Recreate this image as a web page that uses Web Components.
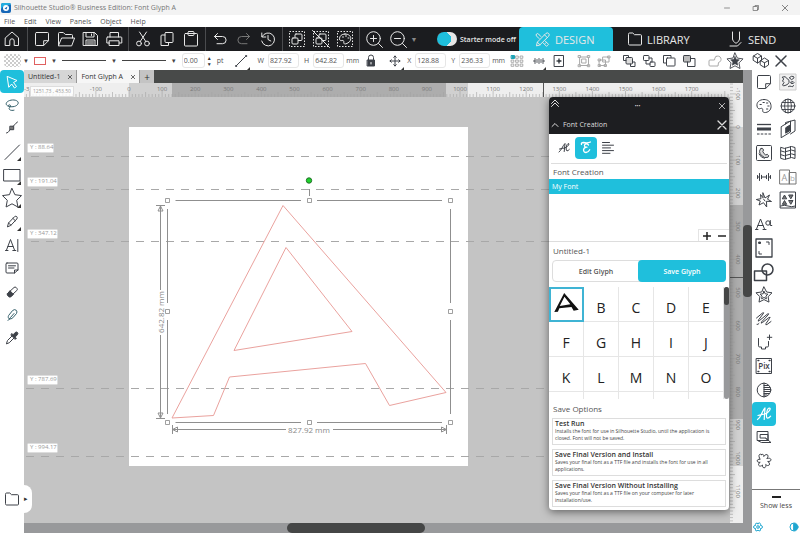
<!DOCTYPE html>
<html lang="en">
<head>
<meta charset="utf-8">
<title>Silhouette Studio</title>
<style>
html,body{margin:0;height:100%}
body{font-family:"Open Sans","Noto Sans",sans-serif;font-size:7px;color:#555;overflow:hidden}
</style>
</head>
<body>
<sk-app></sk-app>
<script>
const define = (name, html, setup) => {
  const t = document.createElement('template');
  t.innerHTML = '<style>*{box-sizing:border-box}button,input,select{font:inherit;color:inherit;margin:0;padding:0;border:0;background:none;outline:0}</style>' + html;
  customElements.define(name, class extends HTMLElement {
    constructor() {
      super();
      this.attachShadow({ mode: 'open' }).append(t.content.cloneNode(true));
    }
    connectedCallback() { if (setup && !this.ready) { this.ready = true; setup(this, this.shadowRoot); } }
  });
};

/* Icons share a 24 x 24 grid and are stroked with the current colour. */
const star = 'M12 4l2.4 5.1 5.6.8-4 4 1 5.6-5-2.7-5 2.7 1-5.6-4-4 5.6-.8z';
const ICONS = {
  home: '<path d="M5.500 10.700L12 5l6.500 5.700V18.500h-4.300V14a2.200 2.200 0 0 0-4.400 0v4.500H5.500z"/>',
  page: '<path d="M6.500 5.500h11q1 0 1 1v7.200l-4.800 4.800H6.500q-1 0-1-1v-11q0-1 1-1zM13.700 18.300v-4.600h4.600"/>',
  open: '<path d="M4.500 18V6.500q0-1 1-1h3.800l2 2h6.200q1 0 1 1V11M4.500 18.500L7.600 11h13l-2.800 7.500z"/>',
  save: '<path d="M5.500 5.500h11l3 3v10h-14zM8 5.500v4.500h8V5.500M8 18.500v-5.500h9v5.500M9.500 15h6M9.500 17h6M13.500 7v1.500"/>',
  print: '<path d="M8 10V5.500h8.500V10M5.500 10h13.500q.8 0 .8.8v5.200h-2.500M7.500 16H4.800v-5.200q0-.8.8-.8M7.500 13.800h9.500v4.700H7.500z"/>',
  cut: '<path d="M8.500 5l6.300 9.500M15.500 5L9.200 14.500"/><circle cx="8" cy="16.500" r="2.400"/><circle cx="16" cy="16.500" r="2.400"/>',
  copy: '<rect x="10" y="5.500" width="8" height="10" rx="1"/><path d="M10 8H7q-1 0-1 1v9.500h7.500v-3"/>',
  paste: '<rect x="5.500" y="6.500" width="13" height="12.500" rx="1"/><rect x="9" y="4.500" width="6" height="4" rx="1"/>',
  undo: '<path d="M9.500 6.500L6.500 9.500l3 3M6.500 9.500h8a3.600 3.600 0 0 1 0 7.200H9"/>',
  redo: '<path d="M14.500 6.500l3 3-3 3M17.500 9.500h-8a3.600 3.600 0 0 0 0 7.200H15"/>',
  history: '<path d="M6.200 9.500a6.500 6.500 0 1 1-.5 4.500M5.800 6v4h4M12 8.500V12.500l2.800 1.500"/>',
  selall: '<rect x="4.500" y="4.500" width="15" height="15" stroke-dasharray="1.500 1.500" stroke-linecap="butt"/><rect x="10" y="7" width="7" height="6.500" rx="1"/><rect x="7" y="11" width="6" height="6" rx="1" fill="#1b1c1f"/>',
  selnone: '<rect x="4.500" y="4.500" width="15" height="15" stroke-dasharray="1.500 1.500" stroke-linecap="butt"/><rect x="10" y="7" width="7" height="6.500" rx="1"/><rect x="7" y="11" width="6" height="6" rx="1" fill="#1b1c1f"/><path d="M3.500 3.500l17 17"/>',
  selcolor: '<rect x="4.500" y="4.500" width="15" height="15" stroke-dasharray="1.500 1.500" stroke-linecap="butt"/><path d="M12 7c-3.500 0-5.500 2-5.500 4.800 0 2 1.500 2 2.500 1.700 1.400-.4 2 .6 1.800 1.700-.3 1.800 1 2 2.200 1.600 3-1 4.800-2.800 4.800-5.300C17.800 8.800 15.500 7 12 7z"/><path d="M9.500 10h1M12.500 9h1M15 11h1"/>',
  zoomin: '<circle cx="11.500" cy="11.500" r="6.800"/><path d="M16.500 16.500l4 4M8.500 11.500h6M11.500 8.500v6"/>',
  zoomout: '<circle cx="11.500" cy="11.500" r="6.800"/><path d="M16.500 16.500l4 4M8.500 11.500h6"/>',
  design: '<path d="M5.500 18.500l.8-3.300L14.800 6.500q1.600-1.300 2.900 0 1.200 1.300 0 2.700L9 17.800zM6.300 15.200L9 17.800M13.500 7.800l2.800 2.800"/><path d="M9.800 9.500L7.500 7q-1.300-1-2 0-1 1 .1 2.100L8 11.500M14.200 14l3.300 3.300q-1 1.500-2 2L12 15.800M15.500 15.300l-1.200 1.200"/>',
  folder: '<path d="M5.500 7q0-1 1-1h3.300l1.700 1.700h6q1 0 1 1v8.300q0 1-1 1h-11q-1 0-1-1z"/>',
  send: '<path d="M8.500 5v7q0 2 2 3l1.500 1.500L13.500 15q2-1 2-3V5M6 19h7.500l3.500-3.500"/>',
  line: '<path d="M7.500 16.500l9-9"/><circle cx="17" cy="7" r=".6"/><circle cx="7" cy="17" r=".6"/>',
  lock: '<rect x="8.500" y="11" width="7" height="6" fill="currentColor"/><path d="M9.500 11V8.500a2.500 2.500 0 0 1 5 0V11"/><path d="M12 13.500v1.500" stroke="#fff"/>',
  move: '<path d="M12 7v10M7 12h10M10.700 8.300L12 7l1.300 1.300M10.700 15.700L12 17l1.300-1.300M8.300 10.700L7 12l1.300 1.300M15.700 10.700L17 12l-1.300 1.300"/>',
  anchor: '<g stroke="#999" stroke-width=".8"><rect x="11" y="7" width="2.300" height="2.300"/><rect x="15.500" y="7" width="2.300" height="2.300"/><rect x="6.500" y="11" width="2.300" height="2.300"/><rect x="11" y="11" width="2.300" height="2.300"/><rect x="15.500" y="11" width="2.300" height="2.300"/><rect x="6.500" y="15" width="2.300" height="2.300"/><rect x="11" y="15" width="2.300" height="2.300"/><rect x="15.500" y="15" width="2.300" height="2.300"/></g><rect x="6.500" y="6.500" width="3" height="3" fill="#1fa3b5" stroke="#1fa3b5"/>',
  align: '<path d="M8 9.500v5M16 9.500v5M10 10.500v3M14 10.500v3M12 9.500v5M6.500 12H8M16 12h1.500" stroke-width=".9"/>',
  spacing: '<path d="M7.500 8.500v7M16.500 8.500v7M9.500 10.300v3.400M14.500 10.300v3.400M5.500 10.500v3M18.500 10.500v3M9.500 12h5M5.500 12h2M16.500 12h2"/>',
  center: '<rect x="7.500" y="6.500" width="9" height="11"/><circle cx="12" cy="12" r="1.200" fill="currentColor"/><path d="M12 9.500v5M9.500 12h5" stroke-width=".8"/>',
  group: '<g stroke="#aaa"><rect x="8" y="8" width="8.500" height="8.500"/><path d="M10 10h4v4h-4zM6.500 6.500h2v2h-2zM15.700 6.500h2v2h-2zM6.500 15.700h2v2h-2zM15.700 15.700h2v2h-2z"/></g>',
  ungroup: '<g stroke="#aaa"><path d="M11 8h6v5h-6zM7.500 11h6v5.500h-6zM16 7h2v2h-2zM6.500 10h2v2h-2zM6.500 15.500h2v2h-2zM12.500 15.500h2v2h-2z"/></g>',
  front: '<rect x="9" y="8.500" width="6.500" height="6.500" rx="1" fill="#ddd"/><path d="M9 11.500H6.500v-5h5v2M15.500 13H18v4.500h-4.500V15"/>',
  forward: '<rect x="6.500" y="6.500" width="5.500" height="5" rx=".8"/><rect x="13" y="13" width="5" height="4.500" rx=".8"/><path d="M12 9h3v4M9 11.500V15h4" fill="none"/>',
  backward: '<path d="M9 14H6.500V6.500H14v2"/><rect x="9.500" y="9" width="8.500" height="8" rx=".8"/>',
  back: '<rect x="6.500" y="6.500" width="7" height="6.500" rx=".8" fill="#bbb"/><path d="M13.500 9.500H18v8h-7.500V13"/>',
  weld: '<path d="M13 7.500a3.300 3.300 0 1 1 2.500 6l-.5 3.500H7q-1 0-1-1v-4q0-1 1-1h4.500q0-2.300 1.500-3.500z" stroke="#aaa"/>',
  offset: '<path d="' + star + '" stroke-width=".9"/><path d="M12 7.500l1.300 2.900 3.100.4-2.300 2.300.6 3.100-2.700-1.500-2.700 1.500.6-3.100-2.300-2.300 3.100-.4z" fill="currentColor" stroke-width=".6"/>',
  boxes: '<path d="M4.500 7l4-2.500 4 2.500v4.500l-4 2.500-4-2.500zM4.500 7l4 2.300L12.500 7M8.500 9.300V14M11.500 11.500l4-2.500 4 2.500V16l-4 2.500-4-2.500zM11.500 11.500l4 2.300 4-2.300M15.500 13.800v4.700" fill="#fff"/>',
  close: '<path d="M7 7l10 10M17 7L7 17" stroke-width="1.500"/>',
  cross: '<path d="M8 8l8 8M16 8l-8 8" stroke-width="1.300"/>',
  pointer: '<path d="M7.500 6.500l9.500 4-3.500 2 3 4-2 1.500-2.800-4-2.700 3z"/>',
  lasso: '<path d="M9 13.500c-3-.8-3.700-3-1.700-4.700 2.500-2.200 8-2.500 10.200-.5 2 2-.5 5-4.500 5.400-3 .3-4.500-.2-4.500-1.200 0-.9 2-1 2 .3 0 1.700-2.300 2.200-1 3.700 1.200 1.200 3.300 1 4.500.7" stroke="#35606b"/>',
  node: '<path d="M6.500 17c3-.5 2-2.500 5-5s3-4 6-6"/><rect x="10.200" y="10.200" width="3.500" height="3.500" fill="#777"/>',
  linetool: '<path d="M5 19.500L19.500 5"/>',
  rect: '<path d="M4 6.500h16v11.500H4z"/>',
  star: '<path d="M12 2.500l2.900 6.200 6.600.9-4.800 4.700 1.200 6.700-5.900-3.200-5.900 3.200 1.200-6.700L2.500 9.600l6.600-.9z"/>',
  pen: '<path d="M7.500 16.500l1-3.500 6-6.300q1.500-1 2.300 0 1 1 0 2.300L11 15.200zM8.500 13l2.500 2.200M13 8.500l2.300 2.200"/>',
  text: '<path d="M6.500 17l4-10.500L14.500 17M8 13.500h5M5.500 17.500h2.500M12.800 17.500h3M17.800 6.500v12"/>',
  note: '<path d="M7 7h10q1 0 1 1v6l-3.500 3H7q-1 0-1-1V8q0-1 1-1zM14.500 17v-3H18M8.500 9.800h7M8.500 12h5.500"/>',
  eraser: '<path d="M7.500 13.500l6.500-6q1-1 2.200 0l.8 1q.8 1-.2 2l-6.500 6z"/><path d="M10.200 11l3.300 3.400-2.700 2.400q-1.300.7-2.200-.2l-1-1q-.9-1.200.2-2.200z" fill="currentColor"/>',
  knife: '<path d="M8 17.500l1.500-1.500M9.300 15.800c-1.300-.4-1.300-2-.7-3.300l4-5q2-1.700 3.700-.2 1.200 1.500.2 3.200l-3.700 4.300c-1 1-2.500 1.300-3.500 1zM10.500 14.500l3.500-4" stroke="#35606b"/>',
  dropper: '<path d="M6.500 17.500l1-3 5-5 2 2-5 5z"/><path d="M11 8.500l1-1 1.200 1.200 2-2.200q1.500-1 2.300 0 .9 1.200-.2 2.300L15.200 11l1.200 1.200-1 1z" fill="currentColor"/>',
  palette: '<path d="M12 5.500c-5 0-7.500 3-7 6.500.4 2.700 2 3.200 3.500 2.500 1.700-.7 2.500.5 2.200 1.800-.3 1.700 1 2.500 3 2.200 3.700-.6 5.800-3.500 5.300-7C18.500 7.500 16 5.500 12 5.500z"/><path d="M8 10.500h1.300M11 8.500h1.300M14.500 9h1.300M15.800 12h1.300M14.500 15h1.300"/>',
  lines: '<g stroke-linecap="butt"><path d="M5 7.500h14" stroke-width="1.300"/><path d="M5 12h14" stroke-width="3"/><path d="M5 17h14" stroke-dasharray="2.500 1.300"/></g>',
  phone: '<rect x="4.500" y="4.500" width="15" height="15" rx="1"/><path d="M9 7.500q2-1 2.500 1.500l-.7 1.500q1 2.500 3 3.500l1.500-.7q2.500 1.500.7 3-3.500 1.500-6.700-2-3.500-4-.3-6.800z" fill="#ddd"/><path d="M7 13q2 4 5.500 4.300"/>',
  burst: '<path d="M11 5l2 5 4.500-3-2 4.200 4 2.300-5-.2.2 5.700-3.200-4.300L7 17l1.300-4-4-1.500 4.700-.8L8.500 6.500l2.300 3z"/><path d="M11.500 11l1.500 2" />',
  fonts: '<path d="M4.500 17L8.500 7l4 10M6 13.500h5M3.500 17.500h2.500M11 17.500h3"/><circle cx="16" cy="11" r="2.200"/><path d="M18.300 8.500v5h1.500"/>',
  trace: '<rect x="4" y="3" width="16" height="18" stroke-width="1.300"/><path d="M14.500 6H17v2.500M7 15.500V18h2.500"/><path d="M7 6h1.500v1.500H7z" fill="currentColor"/>',
  shapes: '<circle cx="15.500" cy="9.500" r="5.500" stroke-width="1.500"/><path d="M2.500 11h12v9.500H2.500z" stroke-width="1.500"/>',
  staroff: '<path d="M12 4l2.600 5 5.400.8-3.900 3.900.9 5.400-5-2.500-5 2.500.9-5.400L4 9.800 9.400 9z"/><path d="M12 8.300l1.200 2.500 2.700.4-2 1.900.5 2.700-2.400-1.300-2.400 1.300.5-2.700-2-1.900 2.700-.4z"/>',
  sketch: '<path d="M4.500 11l6-5q2-1 .5 1l-4.500 6q-1 2 1 .5l8-6.500q2-1 .5 1L9.500 15q-1 2 1 .5l6.500-5q2-.8.5 1L14 16.500q-.7 2 1 1l4-3M5 17.500q1 .5 2-1"/>',
  cutter: '<path d="M6.500 7.500v7.300q0 1.200 1.200 1.200h1.800v2h4v-2h1.800q1.200 0 1.200-1.200v-4.300M17.500 4v4.500M15.300 6.300h4.500"/>',
  pix: '<rect x="4.500" y="4.500" width="15" height="15"/><path d="M6 6.500h.8M17.200 6.500h.8M6 17.500h.8M17.200 17.500h.8" stroke-width="1.500"/><text x="12" y="15" text-anchor="middle" font-size="8" font-weight="600" fill="currentColor" stroke="none">Pix</text>',
  contrast: '<circle cx="12" cy="12" r="6.800"/><path d="M12 5v14M12 7.500h4.500M12 9.500h6M12 11.500h6.500M12 13.500h6.500M12 15.500h5M12 17h3"/>',
  glyph: '<path d="M5.500 17.500q2-1 4-5.500t3.500-6l-.8 11.500M6 13.500q4-1 7-1.500 3-1 4.500-3.500t-.3-2.500q-2 .5-2.600 5.500-.5 4.500 1 4.700 1.500 0 3-2" stroke-width="1.200"/>',
  glyphsmall: '<path d="M7 16q1.500-1 3-4t3-4.500l-.8 8M7.500 13q3-.8 5.300-1 2.500-1 3.700-2.800t-.3-1.700q-1.500.5-2 4-.3 3.300.8 3.400 1 0 2.300-1.400" stroke-width="1"/>',
  popup: '<rect x="5.500" y="6.500" width="10.500" height="9"/><path d="M8.500 9.500h7.500v6l-2.500-2.500H8.500zM13.500 13l5.500 4.500H9.500L5.500 15.500"/>',
  puzzle: '<path d="M9.500 5.500c1.500-.7 2.500.3 2.300 2 1.200-2 3-2.500 4-1.300.7 1.300-.2 2.300-1 3.300 2-.7 4-.2 4.200 1.200 0 1.500-1.500 1.800-3.300 1.800 1.500.8 2.300 2.300 1.500 3.500-1 1-2.400.6-3.500-.5.5 1.500 0 3.200-1.500 3.300-1.600 0-1.800-1.600-1.700-2.800-1.200 1.300-3 1.500-3.800.3-.6-1.300.6-2.300 1.500-3-1.700.3-3-.3-3-1.500s1.200-1.700 3-1.500c-1-1.500-1.800-3.800-.7-4.800.7-.5 1.400-.3 2 0z"/>',
  stickers: '<rect x="4" y="4" width="16" height="16" fill="#f0f0f0" stroke="#ccc"/><path d="M6.500 7q3-1.500 4.500 1.500 3 1.500 2 4t-4 3q-2 1-2.500-.5l1.500-2.500-1.500-1.500 1-1.700zM13.500 7.500q2-2 4-1t-1.500 3zM15 12q3-1 3 .5t-2.500 1zM12.500 16.500q1.500-1 3 0t2-1"/>',
  globe: '<circle cx="12" cy="12" r="6.800"/><path d="M12 5v14M5 12h14M6 8.500h12M6 15.500h12M9.500 5.500q-2 6.500 0 13M14.500 5.500q2 6.500 0 13" stroke-width=".9"/>',
  layers: '<path d="M5.500 9.500l9-5.500v11l-9 5.500z"/><path d="M10 10.500l4.500-2.700v5.500L10 16z" fill="currentColor"/><path d="M9.500 7V5.500L19 3v11l-4.500 3"/>',
  mesh: '<path d="M5 6.500q3.500 2 7 0t7 0v11q-3.500-2-7 0t-7 0zM5 10q3.500 2 7 0t7 0M5 13.800q3.500 2 7 0t7 0M9.500 7.200v11M14.500 5.500v11"/>',
  fontab: '<path d="M4 5h9.500v14H4zM13.500 7.500H20V19h-6.500z" stroke="#777"/><text x="5.500" y="15.500" font-size="9" fill="#999" stroke="none">A</text><text x="14" y="16" font-size="8" fill="#aaa" stroke="none">b</text>',
  nest: '<rect x="4.500" y="4" width="15" height="16"/><path d="M6.500 10.500l2-3.500 2 3.500zM13 7h4l-2 3.500zM6.500 16l2-3.500 2 3.500zM13 12.500h4L15 16z" fill="#777"/><path d="M4.500 18q4-1.500 7.500 0t7.500 0"/>',
  list: '<path d="M6.500 6.500h7M6.500 9.200h11M6.500 11.900h8M6.500 14.600h11M6.500 17.300h7.500"/>',
  script: '<path d="M7.500 8.500q-.7-2 2-2 4 1 7-.5M14.500 9q-1.500-1.700-3.300-.7-1.700 1.500.3 2.900h1.500M12.500 11.200q-2.700.3-3 2.800.2 2.500 2.500 2.500 2.500-.3 3.700-2.700" stroke-width="1.300"/>',
  chevrons: '<path d="M8.500 9.500L12 6l3.500 3.500M8.500 12.500L12 9l3.500 3.500"/>',
  chevron: '<path d="M9 13.500l3-3 3 3"/>',
  plus: '<path d="M12 8v8M8 12h8" stroke-width="1.500" stroke-linecap="butt"/>',
  minus: '<path d="M8 12h8" stroke-width="1.500" stroke-linecap="butt"/>',
  flower: '<path d="M12 8.500q1.500-1.500 2.300 0 .7 1.400 0 1.900 2.200 0 2.200 1.600t-2.200 1.600q.7 1.500-.2 2.200-1.200.6-2.100-.8-.9 1.400-2.100.8-.9-.7-.2-2.200-2.200 0-2.200-1.600t2.200-1.600q-.7-1.300 0-1.900 1.100-.8 2.300 0z"/><circle cx="12" cy="12" r="1.300"/>',
  theme: '<circle cx="12" cy="12" r="4"/><path d="M12 8.500a3.500 3.500 0 0 1 0 7z" fill="currentColor"/>',
  tinyx: '<path d="M10.300 10.300l3.400 3.400M13.700 10.300l-3.400 3.400" stroke-width=".8"/>',
  winmin: '<path d="M9.500 12h5" stroke-width=".7"/>',
  winmax: '<path d="M9.500 10.500h4V14.500h-4zM11 10.500V9.500h3.500v4h-1" stroke-width=".7"/>',
  winx: '<path d="M9.300 9.300l5.400 5.400M14.700 9.300l-5.400 5.400" stroke-width=".8"/>'
};

define('sk-icon', `<style>:host{display:block;flex:none;width:24px;height:24px}svg{display:block;overflow:visible}</style>
<svg width="24" height="24" viewBox="0 0 24 24" fill="none" stroke="currentColor" stroke-width="1" stroke-linejoin="round" stroke-linecap="round" aria-hidden="true"></svg>`,
  (el, root) => { root.querySelector('svg').innerHTML = ICONS[el.getAttribute('name')] || ''; });

define('sk-tool', `<style>
:host{display:flex;width:24px;min-height:0;color:#3d4148}
button{position:relative;display:flex;width:100%;align-items:center;justify-content:center;border-radius:4px;min-width:0;overflow:visible}
:host([narrow]){width:20px}
:host([active]) button{background:#1fbfdc;color:#fff}
:host([corner]) button::after{content:"";position:absolute;right:3px;bottom:2px;border:2px solid;border-color:transparent #333 #333 transparent}
</style><button><sk-icon></sk-icon></button>`,
  (el, root) => {
    const b = root.querySelector('button');
    b.setAttribute('aria-label', el.getAttribute('label') || el.getAttribute('icon'));
    const i = document.createElement('sk-icon');
    i.setAttribute('name', el.getAttribute('icon'));
    b.replaceChildren(i);
  });

define('sk-title-bar', `<style>
:host{display:flex;align-items:center;height:15px;background:#f3f3f3;color:#777}
.logo{width:10px;height:10px;margin:0 3px 0 1px}
h1{font:inherit;margin:0;flex:1}
nav{display:flex;gap:5px;margin-right:3px}
nav sk-tool{color:#666}
</style><svg class="logo" viewBox="0 0 10 10" aria-hidden="true"><rect width="10" height="10" rx="2" fill="#1667b7"/><path d="M0 6q4-5 10-4V2q0-2-2-2H2Q0 0 0 2z" fill="#23aee0"/><circle cx="5" cy="5" r="3" fill="#fff"/><path d="M3.500 5.500l3-2-1 3z" fill="#1667b7"/></svg>
<h1>Silhouette Studio® Business Edition: Font Glyph A</h1>
<nav><sk-tool icon="winmin" label="Minimize"></sk-tool><sk-tool icon="winmax" label="Restore"></sk-tool><sk-tool icon="winx" label="Close"></sk-tool></nav>`);

define('sk-menu-bar', `<style>
:host{display:flex;align-items:center;height:12px;background:#fff;gap:9px;padding-left:4px;color:#555}
</style><button>File</button><button>Edit</button><button>View</button><button>Panels</button><button>Object</button><button>Help</button>`);

define('sk-tool-group', `<style>
:host{display:flex;align-items:center;padding:0 2px;border-right:1px solid #4a4b4e}
:host([first]){padding:0 3px 0 0}:host([last]){border:0}
</style><slot></slot>`);

define('sk-main-bar', `<style>
:host{display:flex;height:24px;background:#1b1c1f;color:#e8e8e8}
sk-tool{color:#e8e8e8}.dim{color:#777}
.more{width:8px;font-size:7px;color:#888}
label{display:flex;align-items:center;gap:3px;margin-left:17px;white-space:nowrap;font-weight:600}
input{appearance:none;width:20px;height:14px;border-radius:7px;background:radial-gradient(circle at 7px 7px,#1fbfdc 7px,#e6e6e6 7px)}
nav{display:grid;grid-template-columns:repeat(3,1fr);flex:1;margin-left:3px}
nav button{display:flex;align-items:center;justify-content:center;font-size:11px;padding-right:6px}
nav .on{background:#1fbfdc;border-radius:4px 4px 0 0}
</style>
<sk-tool-group first><sk-tool icon="home"></sk-tool></sk-tool-group>
<sk-tool-group><sk-tool icon="page"></sk-tool><sk-tool icon="open"></sk-tool><sk-tool icon="save"></sk-tool><sk-tool icon="print"></sk-tool></sk-tool-group>
<sk-tool-group><sk-tool icon="cut"></sk-tool><sk-tool icon="copy"></sk-tool><sk-tool icon="paste"></sk-tool></sk-tool-group>
<sk-tool-group><sk-tool icon="undo"></sk-tool><sk-tool class="dim" icon="redo"></sk-tool><sk-tool icon="history"></sk-tool></sk-tool-group>
<sk-tool-group><sk-tool icon="selall"></sk-tool><sk-tool icon="selnone"></sk-tool><sk-tool icon="selcolor"></sk-tool></sk-tool-group>
<sk-tool-group last><sk-tool icon="zoomin"></sk-tool><sk-tool icon="zoomout"></sk-tool><button class="more" aria-label="Zoom options">▼</button></sk-tool-group>
<label><input type="checkbox" role="switch">Starter mode off</label>
<nav><button class="on"><sk-icon name="design"></sk-icon>DESIGN</button><button><sk-icon name="folder"></sk-icon>LIBRARY</button><button><sk-icon name="send"></sk-icon>SEND</button></nav>`);

define('sk-field', `<style>
:host{display:flex;align-items:center;gap:4px}
input{width:31px;height:15px;border:1px solid #e6e6e6;border-radius:3px;padding-left:1px}
:host([short]) input{width:23px}
:host([short]){gap:0}
</style><label for="f"><slot></slot></label><input id="f">`,
  (el, root) => {
    const i = root.querySelector('input');
    i.value = el.getAttribute('value');
    if (el.hasAttribute('label')) i.setAttribute('aria-label', el.getAttribute('label'));
  });

define('sk-property-bar', `<style>
:host{display:flex;align-items:center;height:19px;background:#fff;color:#555;padding-right:9px}
.drop{display:flex;align-items:center;gap:5px;font-size:6px;color:#444;margin-right:5px}
.first{margin-left:4px;gap:2px}
.check{width:17px;height:13px;border-radius:4px;background:repeating-conic-gradient(#ccc 0 25%,#fff 0 50%) 0 0/4px 4px}
.red{width:12px;height:8px;border:1px solid #e06060}
.rule{width:44px;height:1px;background:#444}
.spin{display:flex;flex-direction:column;font-size:5px;line-height:6px;color:#333;margin:0 5px 0 2px}
.spin button{line-height:6px}
.g{display:flex}
.mid{margin:0 5px}
.push{margin-right:auto}
.edge{margin:0 6px}
.len{margin:0 2px 0 5px}
</style>
<button class="drop first" aria-label="Fill"><span class="check"></span>▼</button>
<button class="drop" aria-label="Line color"><span class="red"></span>▼</button>
<button class="drop" aria-label="Line style"><span class="rule"></span>▼</button>
<button class="drop" aria-label="Line end"><span class="rule"></span>▼</button>
<sk-field short label="Thickness" value="0.00"></sk-field>
<span class="spin"><button aria-label="Increase">▲</button><button aria-label="Decrease">▼</button></span>pt
<sk-tool class="mid" icon="line" corner></sk-tool>
<sk-field value="827.92">W</sk-field>
<sk-field class="len" value="642.82">H</sk-field>mm
<sk-tool icon="lock"></sk-tool>
<sk-tool icon="move" corner></sk-tool>
<sk-field value="128.88">X</sk-field>
<sk-field class="len" value="236.33">Y</sk-field>mm
<sk-tool icon="anchor" class="push"></sk-tool>
<span class="g"><sk-tool narrow corner icon="align"></sk-tool><sk-tool narrow icon="center"></sk-tool></span>
<span class="g mid"><sk-tool narrow icon="group"></sk-tool><sk-tool narrow icon="ungroup"></sk-tool></span>
<span class="g"><sk-tool narrow icon="front"></sk-tool><sk-tool narrow icon="forward"></sk-tool><sk-tool narrow icon="backward"></sk-tool><sk-tool narrow icon="back"></sk-tool></span>
<span class="g edge"><sk-tool narrow icon="weld"></sk-tool><sk-tool narrow icon="offset"></sk-tool></span>
<span class="g"><sk-tool narrow icon="boxes"></sk-tool><sk-tool narrow icon="close"></sk-tool></span>`);

define('sk-toolbox', `<style>
:host{display:flex;flex-direction:column;width:24px;background:#fff}
.tools{flex:12;display:grid;grid-auto-rows:1fr;min-height:0}
.rest{flex:7;display:flex;flex-direction:column;justify-content:flex-end;padding-bottom:20px;min-height:0}
.lib{position:relative;display:flex;height:28px}
.lib::after{content:"▸";position:absolute;z-index:2;left:24px;top:0;width:8px;height:28px;line-height:27px;border-radius:0 8px 8px 0;background:#fff;color:#333}
</style><div class="tools">
<sk-tool icon="pointer" active></sk-tool><sk-tool icon="lasso"></sk-tool><sk-tool icon="node"></sk-tool><sk-tool corner icon="linetool"></sk-tool><sk-tool corner icon="rect"></sk-tool><sk-tool corner icon="star"></sk-tool><sk-tool corner icon="pen"></sk-tool><sk-tool icon="text"></sk-tool><sk-tool icon="note"></sk-tool><sk-tool icon="eraser"></sk-tool><sk-tool icon="knife"></sk-tool><sk-tool icon="dropper"></sk-tool>
</div><div class="rest"><div class="lib"><sk-tool icon="folder" label="Library"></sk-tool></div></div>`);

/* Rulers run along x or y; 331 px stand for 1000 mm. "labels" gives the first and last numbered hundred. */
define('sk-ruler', `<style>:host{display:block;overflow:hidden;background:#eee}svg{display:block;width:100%;height:100%}text{font-size:6px;fill:#777}</style><svg></svg>`,
  (el, root) => {
    const vert = el.hasAttribute('vertical');
    const [zero, page, s1, s2, cursor] = el.getAttribute('marks').split(' ').map(Number);
    const [first, last] = el.getAttribute('labels').split(' ').map(Number);
    const size = vert ? 13 : 14;
    const bar = (a, b, c) => vert ? `<rect x="0" y="${a}" width="${size}" height="${b - a}" fill="${c}"/>` : `<rect x="${a}" y="0" width="${b - a}" height="${size}" fill="${c}"/>`;
    let s = bar(zero, page, '#d0d0d0') + bar(s1, s2, '#adadad'), d = '';
    for (let n = -40; n <= 190; n++) {
      const p = Math.round((zero + n * 3.31) * 10) / 10;
      if (p < 0) continue;
      const len = n % 10 === 0 ? 6 : n % 5 === 0 ? 5 : 3;
      d += vert ? `M0 ${p}h${len}` : `M${p} ${size}v-${len}`;
      if (n % 10 === 0 && n / 10 >= first && n / 10 <= last) s += vert ? `<text text-anchor="middle" transform="translate(6 ${p}) rotate(90)">${n * 10}</text>` : `<text text-anchor="middle" x="${p}" y="8">${n * 10}</text>`;
    }
    s += `<path d="${d}" stroke="#a2a2a2" stroke-width=".6"/>` + bar(cursor, cursor + 1, '#555');
    if (!vert) s += '<text x="0" y="8">-3</text>';
    root.querySelector('svg').innerHTML = s;
  });

define('sk-drawing', `<style>
:host{display:block;background:#c4c4c4;overflow:hidden}
svg{display:block;width:100%;height:100%}
.dim{font-size:8px;fill:#888}.tag{font-size:6px;fill:#999}
</style><svg role="img" aria-label="Glyph A outline on the page">
<rect x="105" y="30" width="339" height="339" fill="#fff"/>
<g stroke="#a8a8a8" fill="none" id="guides"></g>
<g id="tags"></g>
<g fill="none" stroke="#eaa29e"><path d="M259 108.500L422 295.500 365.500 308.500 341.500 266.500 205.500 280 189.500 318.500 148 321zM262 150.500L328 234.500 210 253.500z"/></g>
<g fill="none" stroke="#8f8f8f"><path d="M151.500 103.500H277M293 103.500H418M151.500 325.500H277M293 325.500H418M143.500 112V206M143.500 223V317M426.500 112V206M426.500 223V317M285.500 92v7"/>
<path d="M132 108.500h9M136.500 109V193M136.500 238V320M132 321.500h9M134 114l2.500-5 2.500 5zM134 316l2.500 5 2.500-5zM148.500 328v9M148 332.500H262M309 332.500H422M422.500 328v9M153.500 330l-5 2.500 5 2.500zM417.500 330l5 2.500-5 2.500z"/></g>
<g fill="#fff" stroke="#888" stroke-width=".8"><path d="M141.500 101.500h4v4h-4zM283.500 101.500h4v4h-4zM424.500 101.500h4v4h-4zM141.500 212.500h4v4h-4zM424.500 212.500h4v4h-4zM141.500 323.500h4v4h-4zM283.500 323.500h4v4h-4zM424.500 323.500h4v4h-4z"/></g>
<circle cx="285" cy="83.500" r="2.700" fill="#1fd32c" stroke="#23702a"/>
<text class="dim" x="285" y="335.500" text-anchor="middle">827.92 mm</text>
<text class="dim" transform="translate(140 215) rotate(-90)" text-anchor="middle">642.82 mm</text>
</svg>`, (el, root) => {
  const rows = [[59, 50, '88.64'], [92, 84, '191.04'], [144, 136, '347.12'], [291, 282, '787.69'], [359, 350, '994.17']];
  root.getElementById('guides').innerHTML = rows.map(([y], i) => `<path d="M${i < 3 ? 7 : 2} ${y}.500H2000" stroke-dasharray="8 7"/>`).join('');
  root.getElementById('tags').innerHTML = rows.map(([, y, v]) => `<rect x="3.500" y="${y - 4}.500" width="${v.length < 6 ? 26 : 30}" height="9" rx="1" fill="#fff" stroke="#ddd"/><text class="tag" x="6" y="${y + 2}">Y : ${v}</text>`).join('');
});

define('sk-save-option', `<style>
:host{display:block}
button{display:block;width:100%;text-align:left;border:1px solid #ddd;padding:1px 2px 2px;font-size:5px;line-height:7px;color:#444;white-space:nowrap}
b{display:block;font-size:7px;font-weight:600;line-height:8px;color:#333}
span{display:block}
</style><button><b><slot name="title"></slot></b><span><slot></slot></span></button>`);

define('sk-font-panel', `<style>
:host{display:flex;flex-direction:column;background:#fff;border-radius:4px;overflow:hidden;box-shadow:0 2px 8px rgba(0,0,0,.5);color:#555}
header{background:#1d1e21;color:#ddd;height:37px;display:grid;grid-template-rows:18px 19px}
header div{display:grid;grid-template-columns:12px 1fr 15px;align-items:center;justify-items:center}
header h2{font:inherit;margin:0 0 0 2px;justify-self:start}
header sk-tool{color:#ddd;width:12px}
header span{font-size:5px}
.tabs{display:flex;align-items:center;padding:3px 0 4px 2px;border-bottom:1px solid #ddd;margin:0 2px}
.tabs sk-tool{height:22px;width:22px}
h3{font:inherit;font-size:8px;line-height:15px;margin:0 0 0 4px}
h3.name{line-height:17px}
h3.last{line-height:19px}
.list{height:63px;display:flex;flex-direction:column;justify-content:space-between;align-items:flex-end;border-bottom:1px solid #ddd}
.row{width:100%;background:#1fbfdc;color:#fff;height:15px;text-align:left;padding-left:3px}
.pm{display:flex;height:12px;width:31px;border:1px solid #e4e4e4;border-width:1px 0 0 1px}
.pm sk-tool{width:15px;color:#222}
.acts{display:grid;grid-template-columns:1fr 1fr;border:1px solid #ddd;border-radius:4px;margin:1px 3px 5px;height:22px;font-weight:600}
.acts button{margin:-1px}
.acts .on{background:#1fbfdc;color:#fff;border-radius:4px}
.glyphs{display:grid;grid-template-columns:1fr 5px;height:112px;overflow:hidden}
.cells{display:grid;grid-template-columns:repeat(5,35px);grid-auto-rows:35px;color:#222}
.cells button{border:solid #e6e6e6;border-width:0 1px 1px 0;font-size:14px;padding-top:8px;line-height:20px}
.cells .sel{border:2px solid #3fb4d4;padding:0}
.bar{background:#98999b;border-radius:3px;height:112px}.bar i{display:block;height:18px;background:#454646;border-radius:3px}
.opts{display:grid;gap:4px;padding:0 3px 3px}
</style>
<header><div><sk-tool icon="chevrons" label="Collapse panels"></sk-tool><span>•••</span><sk-tool icon="winx" label="Close panels"></sk-tool></div>
<div><sk-tool icon="chevron" label="Collapse"></sk-tool><h2>Font Creation</h2><sk-tool icon="cross" label="Close"></sk-tool></div></header>
<div class="tabs"><sk-tool icon="glyphsmall"></sk-tool><sk-tool icon="script" active></sk-tool><sk-tool icon="list"></sk-tool></div>
<h3>Font Creation</h3>
<div class="list"><button class="row">My Font</button><div class="pm"><sk-tool icon="plus" label="Add font"></sk-tool><sk-tool icon="minus" label="Remove font"></sk-tool></div></div>
<h3 class="name">Untitled-1</h3>
<div class="acts"><button>Edit Glyph</button><button class="on">Save Glyph</button></div>
<div class="glyphs"><div class="cells"></div><div class="bar"><i></i></div></div>
<h3 class="last">Save Options</h3>
<div class="opts">
<sk-save-option><span slot="title">Test Run</span>Installs the font for use in Silhouette Studio, until the application is<br>closed. Font will not be saved.</sk-save-option>
<sk-save-option><span slot="title">Save Final Version and Install</span>Saves your final font as a TTF file and installs the font for use in all<br>applications.</sk-save-option>
<sk-save-option><span slot="title">Save Final Version Without Installing</span>Saves your final font as a TTF file on your computer for later<br>installation/use.</sk-save-option>
</div>`, (el, root) => {
  root.querySelector('.cells').innerHTML = '<button class="sel" aria-label="Glyph A"><svg width="25" height="21" viewBox="145 105 280 220" aria-hidden="true"><path fill-rule="evenodd" d="M259 108L422 295 365 308 341 266 205 280 189 318 148 321zM262 150L328 234 210 253z" fill="#111"/></svg></button>'
    + [...'BCDEFGHIJKLMNO'].map(c => `<button>${c}</button>`).join('') + '<button aria-label="More glyphs"></button>'.repeat(5);
});

define('sk-workspace', `<style>
:host{position:relative;display:grid;grid-template-columns:minmax(0,1fr) 13px 9px;grid-template-rows:13px 14px minmax(0,1fr) 10px;min-width:0}
.tabs{grid-area:1/1/2/3;background:#484a49;display:flex;align-items:stretch}
.tab{display:flex;align-items:center;gap:3px;background:#d6d6d6;border-right:1px solid #999;padding-left:4px;color:#333;font-size:7px}
.tab sk-tool{width:13px;color:#444}.tab.on{background:#f6f6f6}
.add{background:#c4c4c4;color:#333;width:14px;font-size:10px;line-height:12px}
.h{grid-area:2/1/3/2}.v{grid-area:2/2/4/3}
sk-drawing{grid-area:3/1/4/2}
.vs{grid-area:1/3/4/4;background:#98999b}.hs{grid-area:4/1/5/4;background:#98999b;display:flex}
.vs i{display:block;margin-top:155px;height:72px;border-radius:4px;background:#454646}
.hs i{display:block;width:138px;margin-left:263px;border-radius:5px;background:#454646}
.pos{position:absolute;left:6px;top:16px;padding:0 2px;line-height:9px;font-size:5px;color:#999;background:rgba(255,255,255,.8);border:1px solid #ddd}
sk-font-panel{position:absolute;right:23px;top:27px;width:180px}
</style>
<div class="tabs"><div class="tab"><button>Untitled-1</button><sk-tool icon="tinyx" label="Close Untitled-1"></sk-tool></div><div class="tab on"><button>Font Glyph A</button><sk-tool icon="tinyx" label="Close Font Glyph A"></sk-tool></div><button class="add" aria-label="New tab">+</button></div>
<sk-ruler class="h" marks="105 444 148 422 519" labels="-1 17"></sk-ruler>
<sk-ruler class="v" vertical marks="44 383 122 336 194" labels="-1 11"></sk-ruler>
<sk-drawing></sk-drawing>
<div class="vs"><i></i></div><div class="hs"><i></i></div>
<div class="pos">1251.73 , 453.50</div>
<sk-font-panel></sk-font-panel>`);

define('sk-side-bar', `<style>
:host{display:flex;flex-direction:column;width:48px;background:#fff}
.grid{flex:1;display:grid;grid-template-columns:24px 24px;grid-template-rows:repeat(17,1fr);grid-auto-flow:column;padding-bottom:16px;min-height:0}
footer{border-top:1px solid #777;height:44px;display:flex;flex-direction:column;align-items:center}
footer button{display:block;width:100%;text-align:center;line-height:16px;color:#444;padding-top:6px}
footer button::before{content:"";display:block;width:9px;height:2px;background:#222;margin:0 auto}
.b{display:flex;justify-content:space-between;align-self:stretch;margin:3px -6px 0}
.b sk-tool{height:20px;color:#1fa6d0}
</style><div class="grid"></div>
<footer><button>Show less</button><div class="b"><sk-tool icon="flower" label="Preferences"></sk-tool><sk-tool icon="theme" label="Theme"></sk-tool></div></footer>`,
  (el, root) => {
    root.querySelector('.grid').innerHTML = 'page palette lines phone spacing burst fonts trace shapes staroff sketch cutter pix contrast glyph popup puzzle stickers globe layers mesh fontab nest'
      .split(' ').map(n => `<sk-tool icon="${n}"${n === 'glyph' ? ' active' : ''}></sk-tool>`).join('');
  });

define('sk-app', `<style>
:host{display:flex;flex-direction:column;height:100vh;background:#fff;overflow:hidden}
main{flex:1;display:grid;grid-template-columns:24px minmax(0,1fr) 48px;grid-template-rows:minmax(0,1fr);min-height:0}
sk-toolbox{position:relative;z-index:2}
</style><sk-title-bar></sk-title-bar><sk-menu-bar></sk-menu-bar><sk-main-bar></sk-main-bar><sk-property-bar></sk-property-bar>
<main><sk-toolbox></sk-toolbox><sk-workspace></sk-workspace><sk-side-bar></sk-side-bar></main>`);
</script>
</body>
</html>
